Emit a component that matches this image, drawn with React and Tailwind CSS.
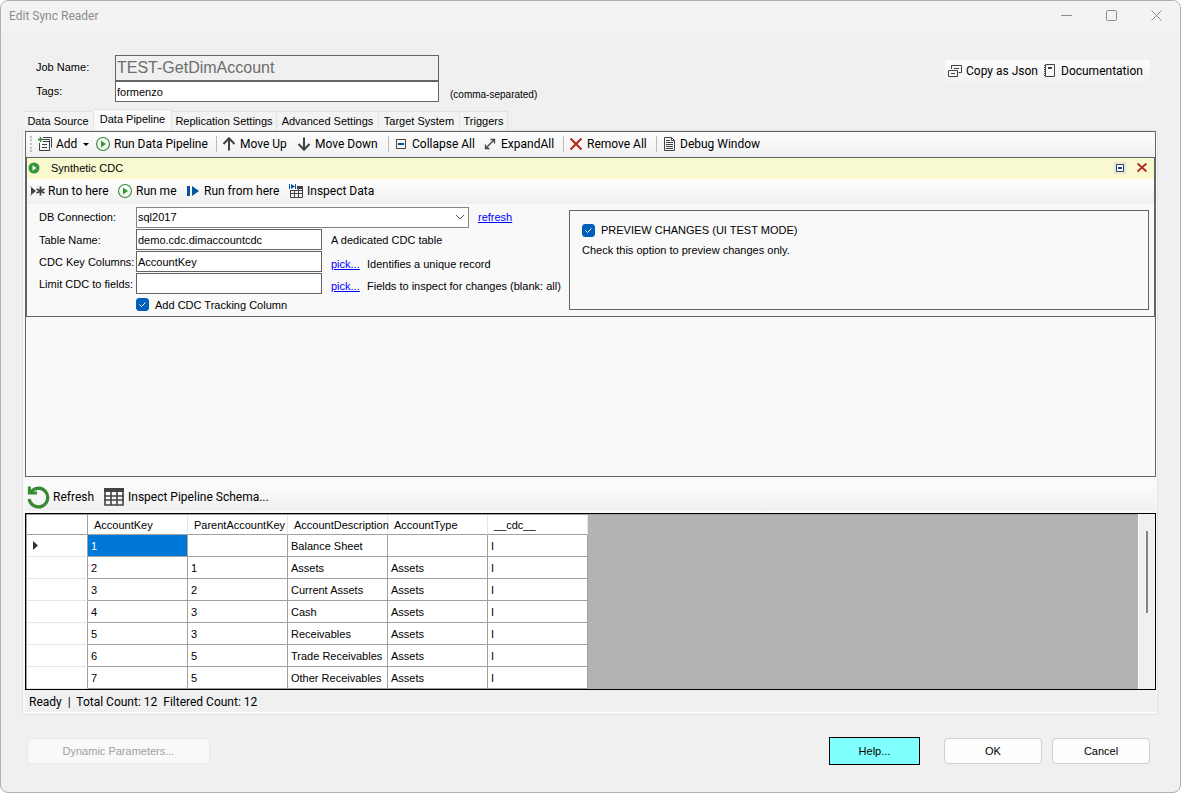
import { useState } from 'react';
import clsx from 'clsx';

const ui = "font-['Roboto','Noto_Sans',sans-serif]";

const tabs = [
  { name: 'Data Source', width: 'w-[71px]' },
  { name: 'Data Pipeline', width: 'w-[78px]' },
  { name: 'Replication Settings', width: 'w-[105px]' },
  { name: 'Advanced Settings', width: 'w-[102px]' },
  { name: 'Target System', width: 'w-[81px]' },
  { name: 'Triggers', width: 'w-[48px]' },
];

const columns = ['AccountKey', 'ParentAccountKey', 'AccountDescription', 'AccountType', '__cdc__'];

const rows = [
  ['1', '', 'Balance Sheet', '', 'I'],
  ['2', '1', 'Assets', 'Assets', 'I'],
  ['3', '2', 'Current Assets', 'Assets', 'I'],
  ['4', '3', 'Cash', 'Assets', 'I'],
  ['5', '3', 'Receivables', 'Assets', 'I'],
  ['6', '5', 'Trade Receivables', 'Assets', 'I'],
  ['7', '5', 'Other Receivables', 'Assets', 'I'],
];

function Icon({ children, size = 16 }) {
  return (
    <svg width={size} height={size} viewBox={`0 0 ${size} ${size}`} fill="none" className="shrink-0" aria-hidden="true">
      {children}
    </svg>
  );
}

const AddIcon = () => (
  <Icon>
    <path d="M6 1.500h8.500v10M5 3.500h7.500v10" stroke="#424242" />
    <path d="M2.500 7v7.500h10V5.500H6" stroke="#424242" />
    <path d="M5 8.500h5M5 11.500h5" stroke="#424242" />
    <path d="M3.500 1v5M1 3.500h5" stroke="#388a34" strokeWidth="1.600" />
  </Icon>
);

const PlayIcon = () => (
  <Icon>
    <circle cx="8" cy="8" r="6.500" stroke="#388a34" strokeWidth="1.100" />
    <path d="M6 4.500v7l5-3.500z" fill="#2f9e2f" />
  </Icon>
);

const PlayDot = () => (
  <Icon size={12}>
    <circle cx="6" cy="6" r="5.500" fill="#33963a" />
    <path d="M4.500 3.200v5.600l4-2.800z" fill="#fff" />
  </Icon>
);

const UpIcon = () => (
  <Icon>
    <path d="M8 14.500V2.500M2.500 8L8 2.300 13.500 8" stroke="#424242" strokeWidth="2" />
  </Icon>
);

const DownIcon = () => (
  <Icon>
    <path d="M8 1.500v12M2.500 8L8 13.700 13.500 8" stroke="#424242" strokeWidth="2" />
  </Icon>
);

const CollapseIcon = () => (
  <Icon>
    <path d="M3.500 3.500h9v9h-9z" stroke="#424242" />
    <path d="M5 8h6" stroke="#00539c" strokeWidth="2" />
  </Icon>
);

const ExpandIcon = () => (
  <Icon>
    <path d="M4 12l8-8M8.500 3.500h4v4M3.500 8.500v4h4" stroke="#424242" strokeWidth="1.300" />
  </Icon>
);

const RemoveIcon = () => (
  <Icon>
    <path d="M2.500 2.500l11 11M13.500 2.500l-11 11" stroke="#b0281c" strokeWidth="2" />
  </Icon>
);

const DocIcon = () => (
  <Icon>
    <path d="M3.500 1.500h7l3 3v10h-10z" stroke="#424242" />
    <path d="M10.500 1.500v3h3M5 4.500h4M5 6.500h7M5 8.500h7M5 10.500h7M5 12.500h7" stroke="#424242" />
  </Icon>
);

const RunToIcon = () => (
  <Icon>
    <path d="M1 3v10l6-5zM1 3h1v10H1z" fill="#424242" />
    <path d="M11.500 3.500v9M7.500 6l8 4M15.500 6l-8 4" stroke="#424242" strokeWidth="1.800" />
  </Icon>
);

const RunFromIcon = () => (
  <Icon>
    <path d="M2 3h3v10H2zM7 3v10l7-5z" fill="#00539c" />
  </Icon>
);

const InspectIcon = () => (
  <Icon>
    <path d="M1.500 1v5M7.500 1v5" stroke="#00539c" />
    <path d="M3 1v5l4-2.500z" fill="#00539c" />
    <path d="M9 3h6v3H9zM2 7h13v1H2z" fill="#424242" />
    <path d="M2.500 7v7.500h12V4M2.500 10.500h12M6.500 7v7.500M10.500 5v9.500M2 7.500h13" stroke="#424242" />
  </Icon>
);

const CopyIcon = () => (
  <Icon>
    <path d="M4.500 6V2.500h10v7H11.500M7 5.500h5" stroke="#424242" />
    <path d="M1.500 7.500h9v6h-9zM4 10.500h4" stroke="#424242" />
  </Icon>
);

const BookIcon = () => (
  <Icon>
    <path d="M2.500 2v12" stroke="#424242" strokeDasharray="1 1" />
    <path d="M3.500 1.500h9v12h-9z" stroke="#424242" />
    <path d="M6 5h4" stroke="#424242" strokeWidth="2" />
  </Icon>
);

const RefreshIcon = () => (
  <Icon size={24}>
    <path d="M4.300 8A9.300 9.300 0 1 1 3.200 14" stroke="#388a34" strokeWidth="3.300" />
    <path d="M3.400 1.500v6.600H11" stroke="#388a34" strokeWidth="3" />
  </Icon>
);

const TableIcon = () => (
  <Icon size={24}>
    <path d="M3 3h20v4H3z" fill="#424242" />
    <path d="M4 6v14h18V6M3 11h20M3 15h20M10 7v13M16 7v13" stroke="#424242" strokeWidth="1.600" />
  </Icon>
);

function ToolButton({ icon, width, menu, children }) {
  return (
    <button type="button" className={clsx('flex shrink-0 items-center gap-[3px] whitespace-nowrap', width)}>
      {icon}
      {children}
      {menu && <span className="ml-[3px] border-x-[3px] border-t-[3px] border-x-transparent border-t-black" />}
    </button>
  );
}

function Separator() {
  return <span className="mr-1 ml-[3px] h-4 w-px shrink-0 bg-[#bdbdbd]" />;
}

function ToolStrip({ className, children }) {
  return (
    <div className={clsx('flex items-center bg-linear-to-b from-[#fdfdfd] to-[#f0f0f0] text-[12px]', ui, className)}>
      {children}
    </div>
  );
}

function CheckBox({ id, checked, onChange }) {
  return (
    <span className="relative size-[13px] shrink-0">
      <input
        id={id}
        type="checkbox"
        checked={checked}
        onChange={(e) => onChange(e.target.checked)}
        className="block size-[13px] appearance-none rounded-[3px] border border-[#626262] bg-white checked:border-[#005fb8] checked:bg-[#005fb8]"
      />
      {checked && (
        <svg className="pointer-events-none absolute inset-0" width="13" height="13" viewBox="0 0 13 13" fill="none">
          <path d="M3.500 6.500l2 2 4-4" stroke="#fff" />
        </svg>
      )}
    </span>
  );
}

const box = 'border border-[#646464] bg-white px-px text-[11px] outline-none';
const link = 'text-[#0000ff] underline';

function StepForm() {
  const [tracking, setTracking] = useState(true);
  const [preview, setPreview] = useState(true);

  return (
    <div className="flex items-start pr-[5px] pb-[2px]">
      <div className="flex w-[542px] shrink-0 flex-col gap-px pt-[2px] pl-3">
        <div className="flex h-[22px] items-center">
          <label htmlFor="db" className="w-[97px]">DB Connection:</label>
          <div className="relative">
            <select id="db" className="block h-[21px] w-[333px] appearance-none border border-[#848484] bg-white px-px text-[11px] outline-none">
              <option>sql2017</option>
            </select>
            <svg className="pointer-events-none absolute top-[7px] right-1" width="10" height="7" viewBox="0 0 10 7" fill="none">
              <path d="M1 1l4 4 4-4" stroke="#555" />
            </svg>
          </div>
          <a href="#refresh" className={clsx('ml-[9px]', link)}>refresh</a>
        </div>
        <div className="flex h-[21px] items-center">
          <label htmlFor="table" className="w-[97px]">Table Name:</label>
          <input id="table" className={clsx('h-[21px] w-[186px]', box)} defaultValue="demo.cdc.dimaccountcdc" />
          <span className="ml-[9px]">A dedicated CDC table</span>
        </div>
        <div className="flex h-[21px] items-center">
          <label htmlFor="keys" className="w-[97px] whitespace-nowrap">CDC Key Columns:</label>
          <input id="keys" className={clsx('h-[21px] w-[186px]', box)} defaultValue="AccountKey" />
          <a href="#pick-keys" className={clsx('ml-[9px] w-9 pt-1', link)}>pick...</a>
          <span className="pt-1">Identifies a unique record</span>
        </div>
        <div className="flex h-[21px] items-center">
          <label htmlFor="limit" className="w-[97px] whitespace-nowrap">Limit CDC to fields:</label>
          <input id="limit" className={clsx('h-[21px] w-[186px]', box)} />
          <a href="#pick-fields" className={clsx('ml-[9px] w-9 pt-1', link)}>pick...</a>
          <span className="pt-1 whitespace-nowrap">Fields to inspect for changes (blank: all)</span>
        </div>
        <div className="flex h-[19px] items-center gap-[6px] pl-[97px]">
          <CheckBox id="tracking" checked={tracking} onChange={setTracking} />
          <label htmlFor="tracking">Add CDC Tracking Column</label>
        </div>
      </div>
      <div className="mt-[6px] h-[100px] flex-1 border border-[#646464] px-3 pt-3">
        <div className="flex h-[14px] items-center gap-[6px]">
          <CheckBox id="preview" checked={preview} onChange={setPreview} />
          <label htmlFor="preview">PREVIEW CHANGES (UI TEST MODE)</label>
        </div>
        <p className="mt-[6px]">Check this option to preview changes only.</p>
      </div>
    </div>
  );
}

function Step() {
  return (
    <section className="border border-[#646464]">
      <header className="flex h-[21px] items-center bg-[#f9f9d0] pr-[5px] pb-[2px] pl-px">
        <PlayDot />
        <h2 className="ml-[11px] flex-1">Synthetic CDC</h2>
        <button type="button" aria-label="Collapse" className="mr-[9px] flex size-3 items-center justify-center bg-[#e3e3e3]">
          <svg width="10" height="10" viewBox="0 0 10 10" fill="none">
            <path d="M1.500 1.500h7v7h-7z" fill="#fff" stroke="#424242" />
            <path d="M3 5h4" stroke="#00539c" strokeWidth="2" />
          </svg>
        </button>
        <button type="button" aria-label="Remove">
          <svg width="14" height="14" viewBox="0 0 14 14" fill="none">
            <path d="M2.500 2.500l9 8M11.500 2.500l-9 8" stroke="#b0281c" strokeWidth="1.700" />
          </svg>
        </button>
      </header>
      <ToolStrip className="h-[25px] pb-px pl-[2px]">
        <ToolButton icon={<RunToIcon />} width="w-[88px]">Run to here</ToolButton>
        <ToolButton icon={<PlayIcon />} width="w-[68px]">Run me</ToolButton>
        <ToolButton icon={<RunFromIcon />} width="w-[103px]">Run from here</ToolButton>
        <ToolButton icon={<InspectIcon />}>Inspect Data</ToolButton>
      </ToolStrip>
      <StepForm />
    </section>
  );
}

function ResultGrid() {
  return (
    <div className="flex h-[177px] border border-black bg-[#b3b3b3]">
      <div className="flex-1 overflow-hidden border-t border-l border-[#a0a0a0]">
        <table className="w-[561px] table-fixed border-separate border-spacing-0 bg-white text-left">
          <colgroup>
            <col className="w-[61px]" />
            {columns.map((name) => <col key={name} className="w-[100px]" />)}
          </colgroup>
          <thead>
            <tr className="h-5">
              <th className="border-r border-b border-[#a0a0a0] p-0" />
              {columns.map((name) => (
                <th key={name} className="border-r border-b border-r-[#e5e5e5] border-b-[#a0a0a0] p-0 pl-[6px] font-normal whitespace-nowrap">
                  {name}
                </th>
              ))}
            </tr>
          </thead>
          <tbody>
            {rows.map((row, i) => (
              <tr key={row[0]} className="h-[22px]">
                <td className="border-r border-b border-r-[#a0a0a0] border-b-[#e5e5e5] p-0 pl-[6px]">
                  {i === 0 && (
                    <svg width="5" height="9" viewBox="0 0 5 9"><path d="M0 0v9l5-4.500z" fill="#333" /></svg>
                  )}
                </td>
                {row.map((cell, j) => (
                  <td
                    key={columns[j]}
                    className={clsx(
                      'border-r border-b border-[#a0a0a0] p-0 pl-[3px] whitespace-nowrap',
                      i === 0 && j === 0 && 'bg-[#0078d7] text-white'
                    )}
                  >
                    {cell}
                  </td>
                ))}
              </tr>
            ))}
          </tbody>
        </table>
      </div>
      <div className="flex w-[17px] justify-center border-l border-white bg-[#f0f0f0] pt-[17px]">
        <span className="h-[82px] w-[2px] bg-[#858585]" />
      </div>
    </div>
  );
}

export default function App() {
  const [activeTab, setActiveTab] = useState('Data Pipeline');

  return (
    <div className="flex min-h-screen flex-col overflow-hidden rounded-lg border border-[#b0b0b0] bg-[#f0f0f0] font-['Liberation_Sans',Arial,sans-serif] text-[11px] leading-[14px] text-black">
      <div className={clsx('flex h-[30px] shrink-0 items-center bg-[#f3f3f3] pr-[18px] pl-2 text-[12px] text-[#8c8c8c]', ui)}>
        <h1 className="flex-1">Edit Sync Reader</h1>
        <div className="flex gap-[34px] pb-[2px]">
          <button type="button" aria-label="Minimize">
            <svg width="11" height="11" viewBox="0 0 11 11"><path d="M0 5.500h11" stroke="#8c8c8c" /></svg>
          </button>
          <button type="button" aria-label="Maximize">
            <svg width="11" height="11" viewBox="0 0 11 11" fill="none"><rect x=".5" y=".5" width="10" height="10" rx="1" stroke="#8c8c8c" /></svg>
          </button>
          <button type="button" aria-label="Close">
            <svg width="11" height="11" viewBox="0 0 11 11"><path d="M.5.500l10 10M10.500.500l-10 10" stroke="#8c8c8c" /></svg>
          </button>
        </div>
      </div>

      <div className="flex items-start justify-between pt-6 pr-[30px] pl-[35px]">
        <div className="flex flex-col">
          <div className="flex h-[26px] items-center">
            <label htmlFor="job" className="w-[79px] pb-[2px]">Job Name:</label>
            <input id="job" disabled className="h-[26px] w-[324px] border border-[#646464] bg-[#f0f0f0] px-px text-[16px] text-[#6d6d6d]" defaultValue="TEST-GetDimAccount" />
          </div>
          <div className="flex h-[21px] items-center">
            <label htmlFor="tags" className="w-[79px] pb-[2px]">Tags:</label>
            <input id="tags" className={clsx('h-[21px] w-[324px]', box)} defaultValue="formenzo" />
            <span className="ml-[11px] pt-[6px] text-[10px]">(comma-separated)</span>
          </div>
        </div>
        <ToolStrip className="mt-[5px] h-[26px] rounded-sm pb-[5px] pl-[2px]">
          <ToolButton icon={<CopyIcon />} width="w-[95px]">Copy as Json</ToolButton>
          <ToolButton icon={<BookIcon />} width="w-[108px]">Documentation</ToolButton>
        </ToolStrip>
      </div>

      <div role="tablist" className="mt-[7px] flex h-[21px] items-end pl-[22px]">
        {tabs.map(({ name, width }) => (
          <button
            key={name}
            type="button"
            role="tab"
            aria-selected={name === activeTab}
            onClick={() => setActiveTab(name)}
            className={clsx(
              'border-t border-r border-[#e3e3e3] whitespace-nowrap',
              width,
              name === activeTab ? 'h-[21px] bg-[#f9f9f9] pb-[3px]' : 'h-[19px] bg-[#f3f3f3]'
            )}
          >
            {name}
          </button>
        ))}
      </div>

      <main className="mr-[22px] ml-[21px] flex flex-1 flex-col border border-[#e3e3e3] bg-[#f9f9f9] pr-px pb-[2px] pl-[2px]">
        <div className="min-h-[346px] flex-1 border border-[#646464]">
          <ToolStrip className="h-[25px] pb-px pl-1">
            <span className="h-4 w-[2px] border-l-2 border-dotted border-[#bdbdbd]" />
            <div className="ml-[5px] flex items-center">
              <ToolButton icon={<AddIcon />} width="w-[58px]" menu>Add</ToolButton>
              <ToolButton icon={<PlayIcon />} width="w-[118px]">Run Data Pipeline</ToolButton>
              <Separator />
              <ToolButton icon={<UpIcon />} width="w-[75px]">Move Up</ToolButton>
              <ToolButton icon={<DownIcon />} width="w-[89px]">Move Down</ToolButton>
              <Separator />
              <ToolButton icon={<CollapseIcon />} width="w-[89px]">Collapse All</ToolButton>
              <ToolButton icon={<ExpandIcon />} width="w-[78px]">ExpandAll</ToolButton>
              <Separator />
              <ToolButton icon={<RemoveIcon />} width="w-[85px]">Remove All</ToolButton>
              <Separator />
              <ToolButton icon={<DocIcon />}>Debug Window</ToolButton>
            </div>
          </ToolStrip>
          <Step />
        </div>

        <ToolStrip className="mt-1 mb-[2px] h-[30px] pt-px pl-px">
          <ToolButton icon={<RefreshIcon />} width="w-[75px]">Refresh</ToolButton>
          <ToolButton icon={<TableIcon />}>Inspect Pipeline Schema...</ToolButton>
        </ToolStrip>

        <ResultGrid />

        <div className={clsx('flex h-[22px] items-center bg-[#f0f0f0] pt-px pl-1 text-[12px] whitespace-pre', ui)}>
          {'Ready  |  Total Count: 12  Filtered Count: 12'}
        </div>
      </main>

      <footer className="mt-[22px] mb-[27px] flex h-7 shrink-0 items-center pr-[30px] pl-[26px]">
        <button type="button" disabled className="h-[26px] w-[183px] rounded-sm border border-[#e8e8e8] bg-[#f9f9f9] text-[#a0a0a0]">
          Dynamic Parameters...
        </button>
        <button type="button" className="ml-auto h-7 w-[91px] border border-black bg-[#80ffff]">Help...</button>
        <button type="button" className="ml-6 h-[26px] w-[98px] rounded-sm border border-[#d0d0d0] bg-[#fdfdfd]">OK</button>
        <button type="button" className="ml-[10px] h-[26px] w-[98px] rounded-sm border border-[#d0d0d0] bg-[#fdfdfd]">Cancel</button>
      </footer>
    </div>
  );
}
